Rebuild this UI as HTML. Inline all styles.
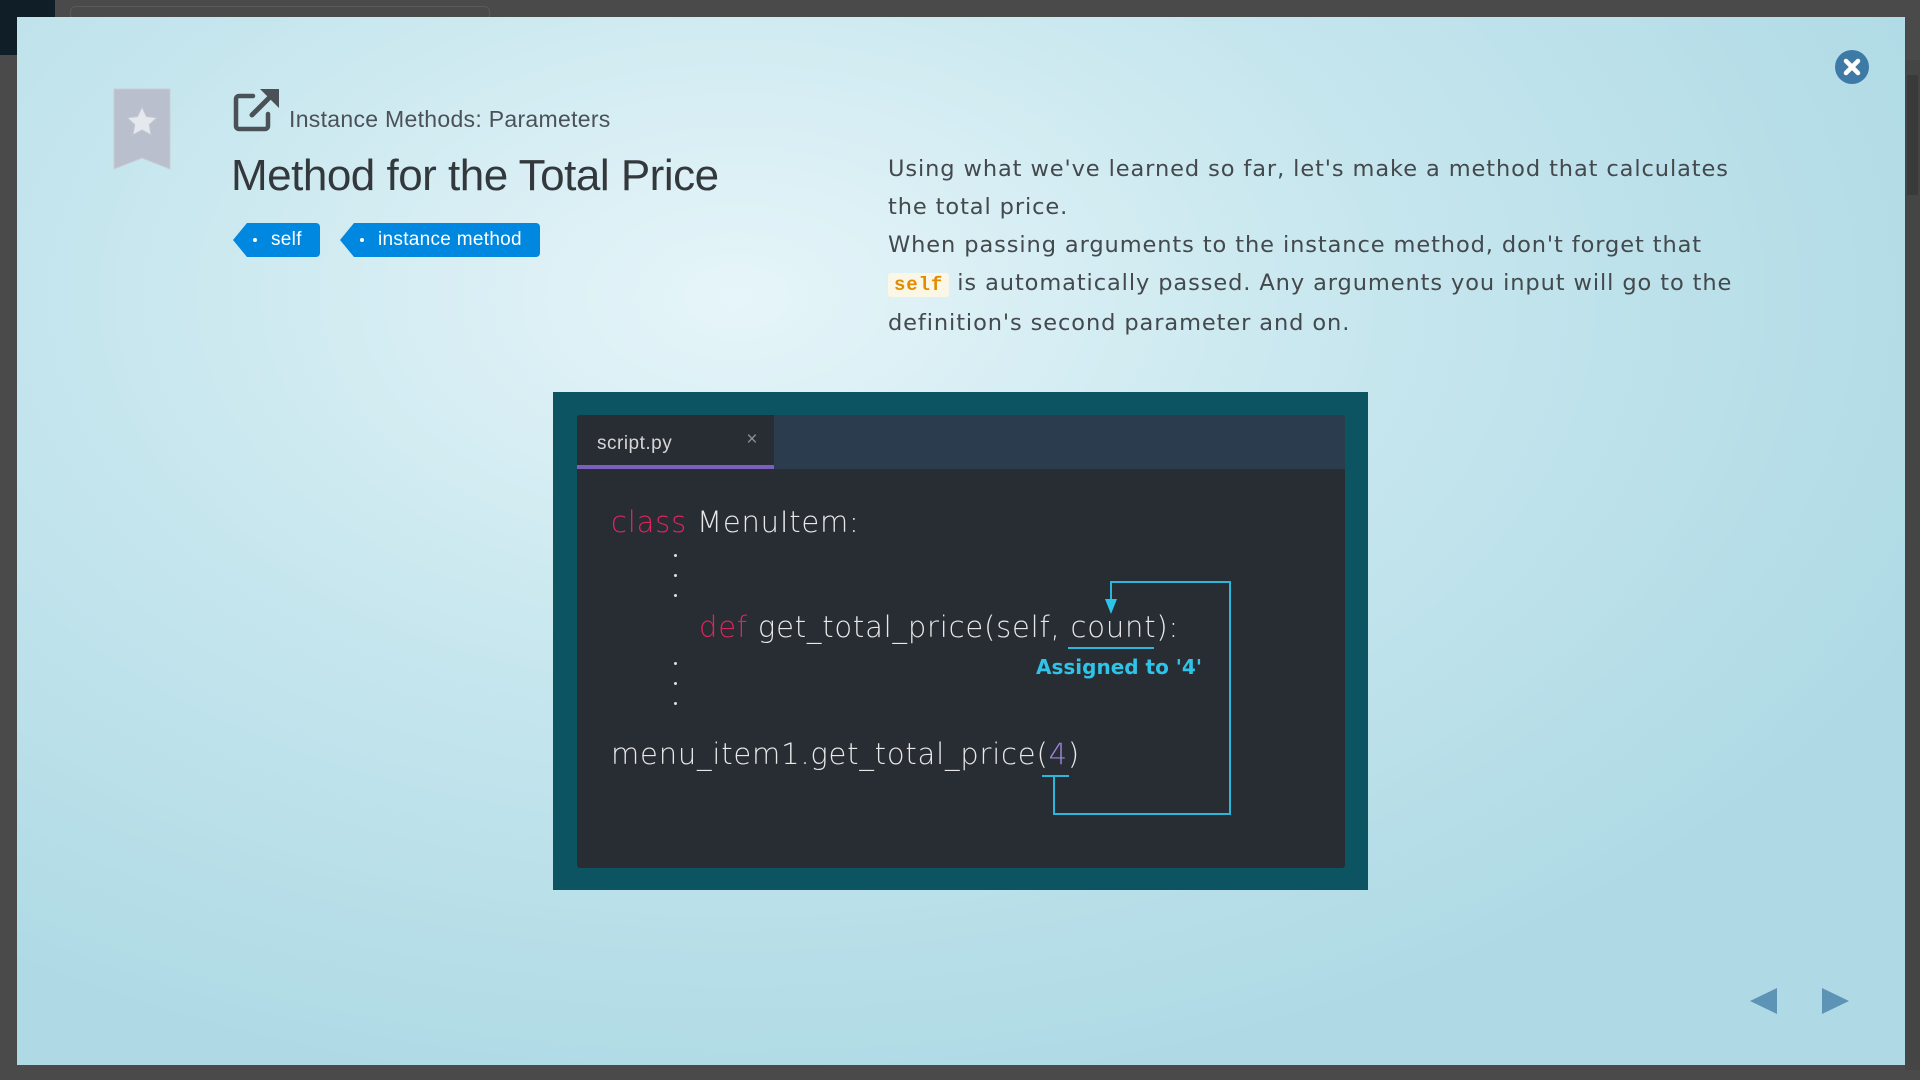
<!DOCTYPE html>
<html><head><meta charset="utf-8"><style>
*{margin:0;padding:0;box-sizing:border-box}
body{width:1920px;height:1080px;background:#4a4a4a;position:relative;overflow:hidden;font-family:"Liberation Sans",sans-serif}
.side{position:absolute;left:0;top:0;width:55px;height:55px;background:#0f1e27}
.bar{position:absolute;left:70px;top:6px;width:420px;height:14px;border:1px solid #5a5a5a;border-radius:6px}
.scroll{position:absolute;right:0;top:60px;width:15px;height:1010px;background:#454545}
.scroll i{position:absolute;left:2px;top:15px;width:11px;height:120px;background:#3a3a3a}
.modal{position:absolute;left:17px;top:17px;width:1888px;height:1048px;background:radial-gradient(ellipse 1300px 800px at 720px 280px,#e6f5f9 0%,#c6e6ee 50%,#afdae5 100%)}
.abs{position:absolute}
.sub{left:272px;top:89px;font-size:23px;color:#4b5257;letter-spacing:.3px}
.title{left:214px;top:134px;font-size:44px;color:#33383c;letter-spacing:-.5px}
.tag{top:206px;height:34px;background:#0088e0;color:#fff;font-size:19px;line-height:34px;border-radius:0 4px 4px 0;padding-left:24px;padding-right:18px;letter-spacing:.3px}
.tag:before{content:"";position:absolute;left:-14px;top:0;border-right:14px solid #0088e0;border-top:17px solid transparent;border-bottom:17px solid transparent}
.tag:after{content:"";position:absolute;left:6px;top:15px;width:4px;height:4px;border-radius:2px;background:#fff}
.para{left:871px;top:133px;width:880px;font-family:"DejaVu Sans",sans-serif;font-size:22.5px;line-height:38px;color:#44494d;letter-spacing:.9px}
.para code{font-family:"Liberation Mono",monospace;background:#fbf7e6;color:#e38b00;padding:1px 6px;font-size:19px;font-weight:bold;border-radius:3px}
.box{left:536px;top:375px;width:815px;height:498px;background:#0c5461}
.inner{left:24px;top:23px;width:768px;height:453px;background:#282c33;border-radius:3px;overflow:hidden}
.tabbar{left:0;top:0;width:768px;height:54px;background:#2b3c4e}
.tab{left:0;top:0;width:197px;height:54px;background:#282c33;border-bottom:4px solid #7a5fbf;color:#d6d6d6;font-size:19px;padding:18px 0 0 20px;letter-spacing:.5px}
.tab span{position:absolute;right:16px;top:14px;color:#8a8f96;font-size:19px}
.code{font-family:"DejaVu Sans",sans-serif;font-weight:200;color:#e8e8e8;font-size:29px;letter-spacing:.8px;white-space:nowrap}
.k{color:#e0245e}
.dot{width:3px;height:3px;background:#ddd;border-radius:2px}
.asg{color:#2ec4ea;font-weight:bold;font-size:20px;font-family:"DejaVu Sans",sans-serif;letter-spacing:0}
</style></head><body>
<div class="side"></div><div class="bar"></div>
<div class="scroll"><i></i></div>
<div class="modal">
<svg class="abs" style="left:96px;top:71px" width="58" height="82" viewBox="0 0 58 82"><path d="M1 1H57V81L29 70L1 81Z" fill="#b9bfcc" stroke="#c8ccd5" stroke-width="1"/><path d="M29 19l4.5 9.5 10.3 1.2-7.6 7.1 2 10.2-9.2-5.1-9.2 5.1 2-10.2-7.6-7.1 10.3-1.2z" fill="#e5e8ef" stroke="#c2c6cf"/></svg>
<svg class="abs" style="left:216px;top:71px" width="50" height="44" viewBox="0 0 50 44"><path d="M20 8H6a3 3 0 0 0-3 3v27a3 3 0 0 0 3 3h26a3 3 0 0 0 3-3V26" fill="none" stroke="#4b5257" stroke-width="4.5" stroke-linecap="round"/><path d="M19 27L41 5" stroke="#4b5257" stroke-width="5" stroke-linecap="round"/><path d="M27 1H46V20Z" fill="#4b5257"/></svg>
<div class="abs sub">Instance Methods: Parameters</div>
<div class="abs title">Method for the Total Price</div>
<div class="abs tag" style="left:230px">self</div>
<div class="abs tag" style="left:337px">instance method</div>
<div class="abs para">Using what we've learned so far, let's make a method that calculates the total price.<br>When passing arguments to the instance method, don't forget that <code>self</code> is automatically passed. Any arguments you input will go to the definition's second parameter and on.</div>
<div class="abs box"><div class="abs inner">
<div class="abs tabbar"></div>
<div class="abs tab">script.py<span>×</span></div>
<div class="abs code" style="left:34px;top:90px"><span class="k">class</span> MenuItem:</div>
<div class="abs dot" style="left:97px;top:139px"></div><div class="abs dot" style="left:97px;top:159px"></div><div class="abs dot" style="left:97px;top:179px"></div>
<div class="abs code" style="left:122px;top:195px"><span class="k">def</span> get_total_price(self, count):</div>
<div class="abs dot" style="left:97px;top:247px"></div><div class="abs dot" style="left:97px;top:267px"></div><div class="abs dot" style="left:97px;top:287px"></div>
<div class="abs code" style="left:34px;top:322px">menu_item1.get_total_price(<span style="color:#9b86d6">4</span>)</div>
<div class="abs asg" style="left:459px;top:240px">Assigned to '4'</div>
<svg class="abs" style="left:0;top:0" width="768" height="453"><g fill="none" stroke="#2bb6dc" stroke-width="2"><path d="M491 233H577"/><path d="M534 186V167H653V399H477V361"/><path d="M465 361H492"/></g><path d="M528 184h12l-6 15z" fill="#2bc4ea"/></svg>
</div></div>
<svg class="abs" style="left:1817px;top:32px" width="36" height="36" viewBox="0 0 36 36"><circle cx="18" cy="18" r="17" fill="#3d7aa5"/><path d="M12 12L24 24M24 12L12 24" stroke="#fff" stroke-width="4.5" stroke-linecap="round"/></svg>
<svg class="abs" style="left:1733px;top:970px" width="30" height="28"><path d="M0 14L27 1V27Z" fill="#5d93b5"/></svg>
<svg class="abs" style="left:1804px;top:970px" width="30" height="28"><path d="M28 14L1 1V27Z" fill="#5d93b5"/></svg>
</div>
</body></html>
